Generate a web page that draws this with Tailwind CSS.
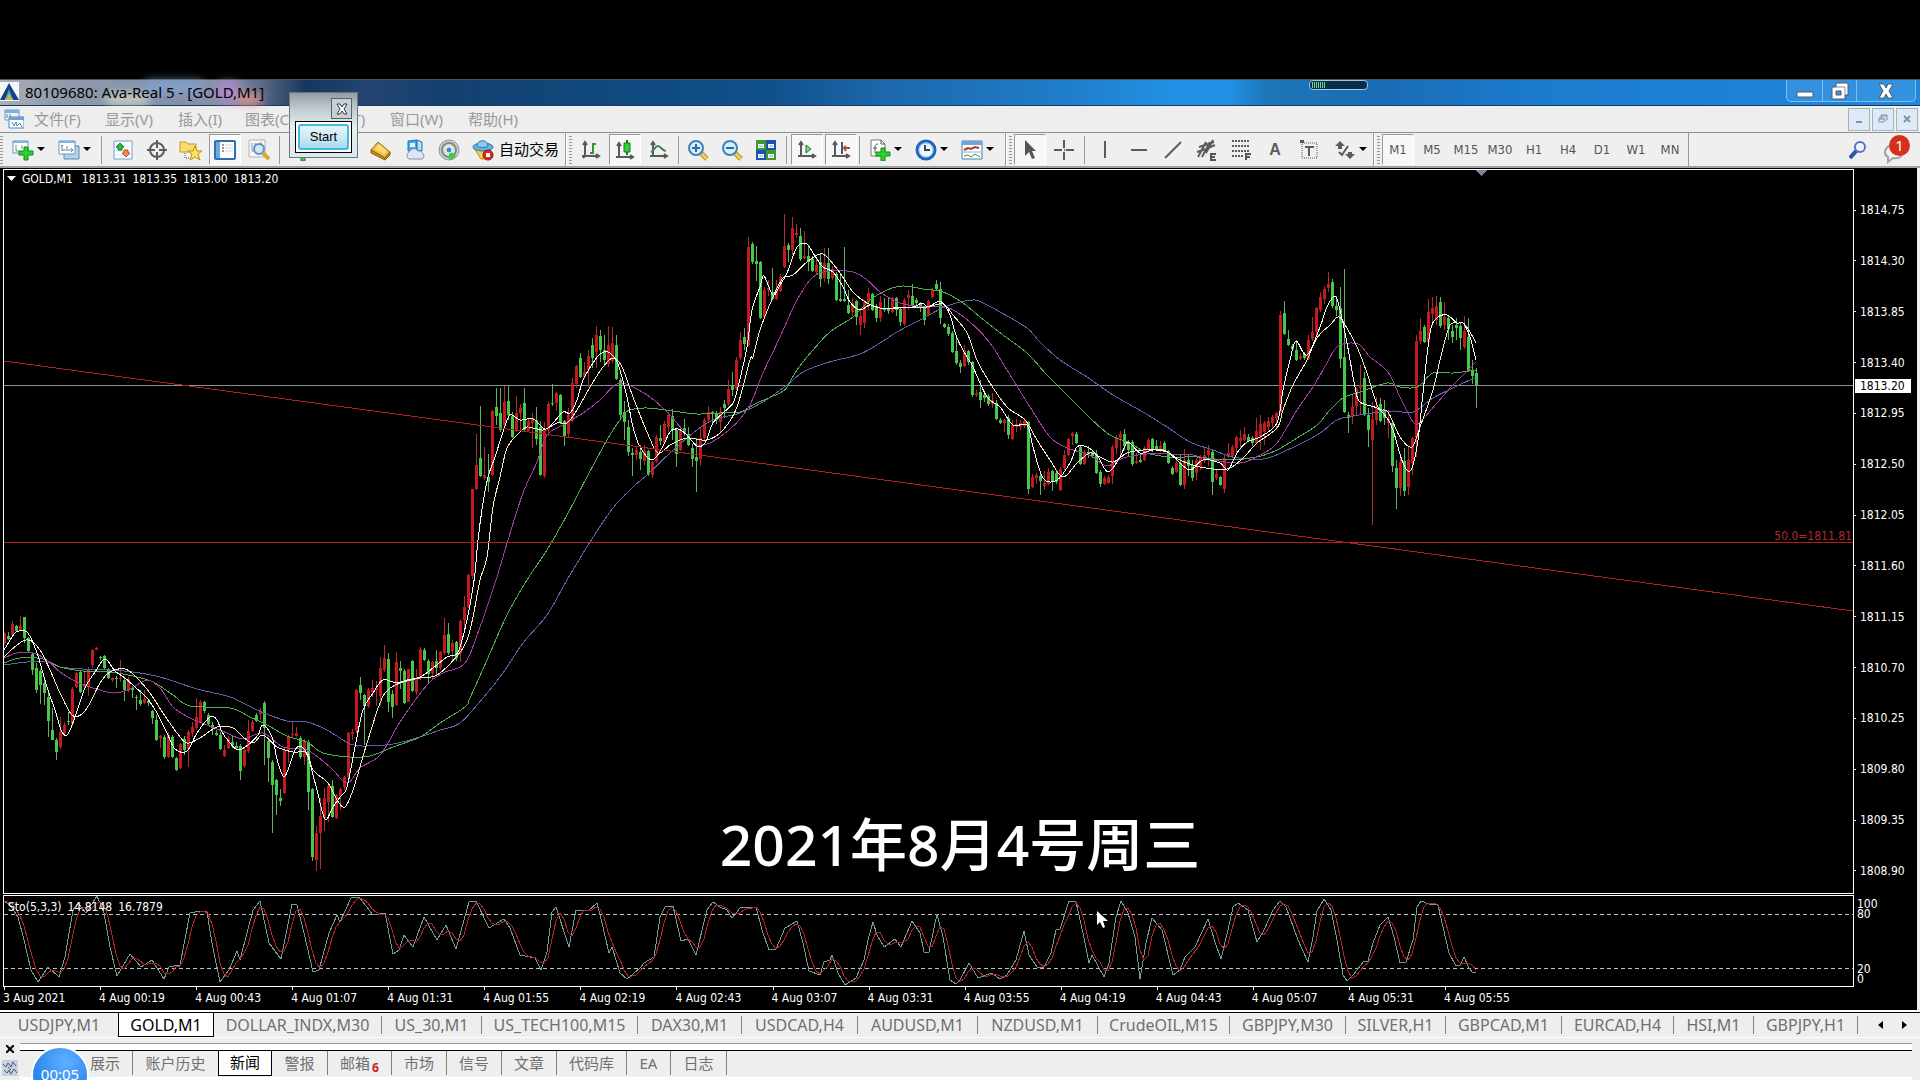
<!DOCTYPE html>
<html lang="zh-CN">
<head>
  <meta charset="UTF-8" />
  <meta name="viewport" content="width=device-width, initial-scale=1" />
  <title>80109680: Ava-Real 5 - [GOLD,M1]</title>
  <script src="https://cdn.jsdelivr.net/npm/@tailwindcss/browser@4"></script>
</head>
<body class="relative h-screen flex flex-col overflow-hidden bg-black font-['Noto_Sans','Noto_Sans_CJK_SC',sans-serif] text-[15px] text-black">
  <div class="h-[79px] shrink-0 bg-black"></div>

  <!-- Title bar -->
  <header class="relative h-[27px] shrink-0 flex items-center justify-between border-t border-b border-t-[#5b5346] border-b-[#163a63] bg-[linear-gradient(90deg,#a9b0bb_0%,#939bab_3%,#8391ab_8%,#8b8fa6_12%,#3f5675_14.5%,#143660_16%,#24446f_19%,#14406f_23%,#0f4a80_33%,#10508b_40%,#1c68ab_46%,#1f7cc8_55%,#2290e4_61%,#2290e4_64%,#1d76b8_66%,#1a6cb4_72%,#1b7bcf_80%,#2187dc_100%)]">
    <!-- Colours of the desktop showing through the glass -->
    <div class="absolute left-[5.500%] bottom-0 w-[44px] h-[12px] rounded-full bg-[#f2f3cf]/60 blur-[5px]"></div>
    <div class="absolute left-[7.500%] top-0 w-[60px] h-[14px] rounded-full bg-[#7ea6d8]/70 blur-[5px]"></div>
    <div class="absolute left-[11.200%] top-[2px] w-[26px] h-[20px] rounded-full bg-[#b48ad8]/80 blur-[5px]"></div>
    <div class="absolute left-[12.300%] bottom-0 w-[26px] h-[12px] rounded-full bg-[#f09a8a]/80 blur-[5px]"></div>
    <div class="relative flex items-center gap-[6px] pb-[2px]">
      <svg class="w-[19px] h-[19px]" viewBox="0 0 19 19"><rect width="19" height="19" fill="#f4f6f8"/><path d="M9 1 0 18h5l4-8 4 8h6z" fill="#173f86"/><path d="M9 7 5 17h8z" fill="#3aa0d0"/><path d="m9 11-3 7h6z" fill="#d9b830"/></svg>
      <h1 class="text-[15px] leading-[20px] whitespace-nowrap">80109680: Ava-Real 5 - [GOLD,M1]</h1>
    </div>
    <div class="absolute left-[68.2%] top-0 w-[59px] h-[10px] rounded-[4px] border border-[#9cc9e8] bg-[#0c2c4c] flex items-center gap-px pl-[2px]">
      <i class="w-px h-[6px] bg-[#6fdc7a]"></i><i class="w-px h-[6px] bg-[#6fdc7a]"></i><i class="w-px h-[6px] bg-[#6fdc7a]"></i><i class="w-px h-[6px] bg-[#6fdc7a]"></i><i class="w-px h-[6px] bg-[#6fdc7a]"></i><i class="w-px h-[6px] bg-[#6fdc7a]"></i><i class="w-px h-[6px] bg-[#6fdc7a]"></i>
    </div>
    <div class="self-start mr-1 flex h-[22px] rounded-b-[5px] border border-t-0 border-[#7fc0f0] bg-[#3f9be4]/60">
      <button class="w-[36px] grid place-items-center border-r border-[#7fc0f0]" aria-label="Minimize"><svg class="w-[18px] h-[18px]" viewBox="0 0 18 18"><rect x="1" y="10" width="16" height="5" rx="1" fill="#fff" stroke="#4c5a6a"/></svg></button>
      <button class="w-[34px] grid place-items-center border-r border-[#7fc0f0]" aria-label="Restore"><svg class="w-[18px] h-[18px]" viewBox="0 0 18 18"><path d="M5 1h12v12h-3v4H1V5h4z" fill="#fff" stroke="#4c5a6a"/><path d="M5 9h5v4H5z" fill="#4d93cc" stroke="#4c5a6a"/><path d="M5 5h9v8" fill="none" stroke="#8291a3"/></svg></button>
      <button class="w-[58px] grid place-items-center" aria-label="Close"><svg class="w-[16px] h-[16px]" viewBox="0 0 16 16"><path d="M1 1h5l2 4 2-4h5l-4 7 4 7h-5l-2-4-2 4H1l4-7z" fill="#fff" stroke="#4c5a6a"/></svg></button>
    </div>
  </header>

  <!-- Menu -->
  <nav class="h-[26px] shrink-0 flex items-center justify-between bg-[#eeeeee] text-[#999]">
    <div class="flex items-center whitespace-nowrap">
      <svg class="w-[20px] h-[20px] ml-1 mr-[10px]" viewBox="0 0 20 20"><path d="M1 1h14v10H1z" fill="#eaf3fb" stroke="#6d9cc8"/><path d="M1 1h14v3H1z" fill="#7fb0dc"/><path d="M5 8h15v11H5z" fill="#fff" stroke="#4f86bb"/><path d="M5 8h15v3H5z" fill="#6aa2d4"/><path d="m8 13 2 4 2-4 1 4 3-3 2 4M3 5v4M6 5v3" fill="none" stroke="#5b7f9f"/></svg>
      <a href="#" class="w-[71px]">文件(F)</a>
      <a href="#" class="w-[73px]">显示(V)</a>
      <a href="#" class="w-[67px]">插入(I)</a>
      <a href="#" class="w-[73px]">图表(C)</a>
      <a href="#" class="w-[72px]">工具(T)</a>
      <a href="#" class="w-[78px]">窗口(W)</a>
      <a href="#">帮助(H)</a>
    </div>
    <div class="flex gap-[2px] pr-[2px]">
      <button class="w-[22px] h-[23px] grid place-items-center border border-[#9db5bd] bg-[#dfe9f7]" aria-label="Minimize chart"><svg class="w-3 h-3" viewBox="0 0 12 12"><path d="M3 9h6" stroke="#7d94a8" stroke-width="2"/></svg></button>
      <button class="w-[22px] h-[23px] grid place-items-center border border-[#9db5bd] bg-[#dfe9f7]" aria-label="Restore chart"><svg class="w-3 h-3" viewBox="0 0 12 12"><path d="M4 2h6v5H8M2 5h5v4H2zM4 2v3M2 6h5M4 3h6" fill="none" stroke="#7d94a8"/></svg></button>
      <button class="w-[22px] h-[23px] grid place-items-center border border-[#9db5bd] bg-[#dfe9f7]" aria-label="Close chart"><svg class="w-3 h-3" viewBox="0 0 12 12"><path d="m3 3 6 6M9 3 3 9" stroke="#7d94a8" stroke-width="2"/></svg></button>
    </div>
  </nav>

  <!-- Toolbars -->
  <div class="h-[36px] shrink-0 flex justify-between border-t border-b-2 border-t-[#8f8f8f] border-b-[#a0a0a0] bg-[#efefef]">
    <div class="flex">
      <!-- Standard -->
      <div class="w-[566px] flex items-center border-r border-[#999]">
        <i class="w-[3px] h-[28px] mr-px bg-[repeating-linear-gradient(180deg,#999_0_1px,#efefef_1px_3px)]"></i>
        <button class="w-[46px] h-[30px] pl-2 flex items-center gap-[3px]" aria-label="New chart">
          <svg class="w-[22px] h-[22px]" viewBox="0 0 22 22"><path d="M1 2h15v12H1z" fill="#fff" stroke="#5c95c8"/><path d="M1 2h15v2H1z" fill="#7fb2df"/><path d="M4 6v6h3M10 6v4" stroke="#7a8a9a" fill="none"/><path d="M12 8h4v4h5v4h-5v5h-4v-5H7v-4h5z" fill="#2ed02e" stroke="#108a18"/></svg>
          <svg class="w-2 h-[5px]" viewBox="0 0 8 5"><path d="M0 0h8L4 4z"/></svg>
        </button>
        <button class="w-[46px] h-[30px] pl-2 flex items-center gap-[3px]" aria-label="Profiles">
          <svg class="w-[22px] h-[22px]" viewBox="0 0 22 22"><path d="M6 7h15v13H6z" fill="#b6d2ec" stroke="#5b86b0"/><path d="M1 2h16v13H1z" fill="#fff" stroke="#5c95c8"/><path d="M1 2h16v2H1z" fill="#7fb2df"/><path d="M4 6v6M3 7l1-1 1 1M4 11h11M13 9l2 2-2 2M9 7v3" fill="none" stroke="#6d7d8d"/></svg>
          <svg class="w-2 h-[5px]" viewBox="0 0 8 5"><path d="M0 0h8L4 4z"/></svg>
        </button>
        <i class="w-px h-[28px] ml-[5px] mr-[4px] bg-[#999]"></i>
        <button class="w-[34px] h-[30px] grid place-items-center" aria-label="Market watch"><svg class="w-[22px] h-[22px]" viewBox="0 0 22 22"><path d="M2 2h18v18H2z" fill="#fbfdff" stroke="#6aa0cf"/><path d="M4 8h14M4 12h14M4 16h14" stroke="#dbe5ee"/><path d="M8 4l4 4h-2v3H6V8H4z" fill="#36b848" stroke="#157a20"/><path d="M14 18l4-4h-2v-3h-4v3h-2z" fill="#f08a50" stroke="#c0521c"/></svg></button>
        <button class="w-[34px] h-[30px] grid place-items-center" aria-label="Data window"><svg class="w-[22px] h-[22px]" viewBox="0 0 22 22"><circle cx="11" cy="11" r="7" fill="none" stroke="#5c5c5c" stroke-width="2"/><path d="M11 1v8M11 13v8M1 11h8M13 11h8" stroke="#5c5c5c" stroke-width="2"/></svg></button>
        <button class="w-[34px] h-[30px] grid place-items-center" aria-label="Navigator folders"><svg class="w-[24px] h-[22px]" viewBox="0 0 24 22"><path d="M1 3h6l2 2h8v8H1z" fill="#f9dd70" stroke="#c39b26"/><path d="M6 14v5h4" fill="none" stroke="#555" stroke-dasharray="1 1"/><path d="m16 7 2 5h5l-4 3 2 6-5-3-5 3 2-6-4-3h5z" fill="#ffe25a" stroke="#b98e1c"/></svg></button>
        <button class="w-[32px] h-[31px] mx-px grid place-items-center border border-[#999] border-b-white border-r-white bg-[#f7f7f7]" aria-label="Navigator"><svg class="w-[22px] h-[20px]" viewBox="0 0 22 20"><rect x="1" y="1" width="20" height="18" rx="1" fill="#fff" stroke="#2e6fb2" stroke-width="2"/><path d="M2 2h4v16H2z" fill="#6ea7dc"/><path d="M8 5h2M8 8h2M8 11h2" stroke="#333" stroke-width="1"/><path d="M11 5h8M11 8h8M11 11h8" stroke="#cfd6dd"/></svg></button>
        <button class="w-[34px] h-[30px] grid place-items-center" aria-label="Strategy tester"><svg class="w-[22px] h-[22px]" viewBox="0 0 22 22"><path d="M1 1h16v17H1z" fill="#f6f6f6" stroke="#a9b4be"/><path d="M4 4v8M7 4v5M13 3v4M4 12h10" stroke="#8899aa" fill="none"/><circle cx="11" cy="10" r="5" fill="#cfe6f7" fill-opacity=".85" stroke="#5b93c2" stroke-width="2"/><path d="m15 14 6 6" stroke="#d7a935" stroke-width="4"/></svg></button>
        <i class="w-px h-[28px] ml-[3px] mr-[2px] bg-[#999]"></i>
        <button class="w-[82px] h-[30px] pl-2 flex items-center" aria-label="New order"><svg class="w-[22px] h-[22px]" viewBox="0 0 22 22"><path d="M2 1h13v16H2z" fill="#fff" stroke="#8aa"/><path d="M11 10h4v4h5v4h-5v4h-4v-4H7v-4h4z" fill="#2ed02e" stroke="#108a18"/></svg></button>
        <button class="w-[34px] h-[30px] grid place-items-center" aria-label="MetaEditor"><svg class="w-[22px] h-[22px]" viewBox="0 0 22 22"><path d="M8 3 20 13l-5 6L1 11z" fill="#f3bf3e" stroke="#9b6a10"/><path d="M1 11v3l14 7 5-5v-3l-5 6z" fill="#d38f1c" stroke="#8c5d0d"/><path d="m9 5 8 7-3 3-9-5z" fill="#fbdc83"/></svg></button>
        <button class="w-[34px] h-[30px] grid place-items-center" aria-label="Market"><svg class="w-[22px] h-[22px]" viewBox="0 0 22 22"><path d="m4 2 9-1v10l-9 1z" fill="#3fa9ea" stroke="#2372b8"/><path d="m13 1 5 2v9l-5-1z" fill="#b8dcf4" stroke="#2372b8"/><path d="M6 4h5v4H6z" fill="#e8f6ff"/><path d="M5 20a4 4 0 0 1 0-7 5 5 0 0 1 9-1 4 4 0 0 1 5 3 3 3 0 0 1-1 5z" fill="#dfe5f2" stroke="#8090b0"/></svg></button>
        <button class="w-[34px] h-[30px] grid place-items-center" aria-label="Signals"><svg class="w-[22px] h-[22px]" viewBox="0 0 22 22"><circle cx="11" cy="11" r="10" fill="#c9cfcb" stroke="#929c96"/><circle cx="11" cy="11" r="7" fill="#dde2df" stroke="#808d86" stroke-width="2"/><path d="M11 11v10a10 10 0 0 0 7-4z" fill="#48c848"/><circle cx="11" cy="11" r="3" fill="#3f89c4" stroke="#dff"/></svg></button>
        <button class="h-[30px] pl-[6px] flex items-center gap-[5px] text-[15px] whitespace-nowrap"><svg class="w-[22px] h-[22px]" viewBox="0 0 22 22"><path d="M2 9h17l-6 11H9z" fill="#f5cf52" stroke="#b88d1d"/><ellipse cx="11" cy="8" rx="10" ry="4" fill="#69b3e0" stroke="#3275a8"/><path d="M5 7c0-7 11-7 11 0-3 2-8 2-11 0z" fill="#8ccbf0" stroke="#3275a8"/><circle cx="16" cy="16" r="5" fill="#d82a20" stroke="#9c130c"/><path d="M14 14h4v4h-4z" fill="#fff"/></svg>自动交易</button>
      </div>

      <!-- Charts -->
      <div class="w-[440px] flex items-center border-r border-[#999] border-l border-l-white">
        <i class="w-[3px] h-[28px] mx-[2px] bg-[repeating-linear-gradient(180deg,#999_0_1px,#efefef_1px_3px)]"></i>
        <button class="w-[34px] h-[30px] grid place-items-center" aria-label="Bar chart"><svg class="w-[20px] h-[20px]" viewBox="0 0 20 20"><path d="M4 3v13M1 16h17M2 5l2-3 2 3M15 14l3 2-3 2M2 18l2-2" fill="none" stroke="#5a5a5a" stroke-width="2"/><path d="M12 3v11M12 4h3M9 13h3" stroke="#2c9a35" stroke-width="2" fill="none"/></svg></button>
        <button class="w-[32px] h-[31px] mx-px grid place-items-center border border-[#999] border-b-white border-r-white bg-[#f7f7f7]" aria-label="Candlesticks"><svg class="w-[20px] h-[22px]" viewBox="0 0 20 22"><path d="M4 5v13M1 18h17M2 7l2-3 2 3M15 16l3 2-3 2" fill="none" stroke="#5a5a5a" stroke-width="2"/><path d="M12 1v15" stroke="#157a20" stroke-width="2"/><path d="M9 4h6v9H9z" fill="#2ed040" stroke="#157a20"/></svg></button>
        <button class="w-[34px] h-[30px] grid place-items-center" aria-label="Line chart"><svg class="w-[20px] h-[20px]" viewBox="0 0 20 20"><path d="M4 3v13M1 16h17M2 5l2-3 2 3M15 14l3 2-3 2" fill="none" stroke="#5a5a5a" stroke-width="2"/><path d="M2 12c3-1 4-6 7-6s4 5 8 5" stroke="#4c8052" fill="none" stroke-width="2"/></svg></button>
        <i class="w-px h-[28px] mx-[2px] bg-[#999]"></i>
        <button class="w-[34px] h-[30px] grid place-items-center" aria-label="Zoom in"><svg class="w-[22px] h-[22px]" viewBox="0 0 22 22"><path d="m14 14 6 6" stroke="#b8902c" stroke-width="5"/><path d="m14 14 6 6" stroke="#f0cf58" stroke-width="3"/><circle cx="9" cy="9" r="7" fill="#d9eefb" stroke="#3c83bd" stroke-width="2"/><path d="M5 9h8M9 5v8" stroke="#2b6ca6" stroke-width="2"/></svg></button>
        <button class="w-[34px] h-[30px] grid place-items-center" aria-label="Zoom out"><svg class="w-[22px] h-[22px]" viewBox="0 0 22 22"><path d="m14 14 6 6" stroke="#b8902c" stroke-width="5"/><path d="m14 14 6 6" stroke="#f0cf58" stroke-width="3"/><circle cx="9" cy="9" r="7" fill="#d9eefb" stroke="#3c83bd" stroke-width="2"/><path d="M5 9h8" stroke="#2b6ca6" stroke-width="2"/></svg></button>
        <button class="w-[34px] h-[30px] grid place-items-center" aria-label="Tile windows"><svg class="w-[22px] h-[22px]" viewBox="0 0 22 22"><path d="M1 1h10v10H1zM11 11h10v10H11z" fill="#3f9a2c"/><path d="M11 1h10v10H11zM1 11h10v10H1z" fill="#1e50b0"/><path d="M3 5h6v4H3zM13 5h6v4h-6zM3 15h6v4H3zM13 15h6v4h-6z" fill="#eef6ff"/><path d="M4 7h4M14 7h4M4 17h4M14 17h4" stroke="#8ab"/></svg></button>
        <i class="w-px h-[28px] mx-[3px] bg-[#999]"></i>
        <button class="w-[32px] h-[31px] mx-px grid place-items-center border border-[#999] border-b-white border-r-white bg-[#f7f7f7]" aria-label="Auto scroll"><svg class="w-[20px] h-[20px]" viewBox="0 0 20 20"><path d="M4 3v13M1 16h17M2 5l2-3 2 3M15 14l3 2-3 2" fill="none" stroke="#5a5a5a" stroke-width="2"/><path d="m9 5 5 4-5 4z" fill="#7fdc86" stroke="#157a20"/></svg></button>
        <button class="w-[32px] h-[31px] mx-px grid place-items-center border border-[#999] border-b-white border-r-white bg-[#f7f7f7]" aria-label="Chart shift"><svg class="w-[20px] h-[20px]" viewBox="0 0 20 20"><path d="M4 3v13M1 16h17M2 5l2-3 2 3M15 14l3 2-3 2" fill="none" stroke="#5a5a5a" stroke-width="2"/><path d="M11 2v12" stroke="#2b5f8c" stroke-width="2"/><path d="M19 8h-6M15 6l-2 2 2 3" stroke="#c04a1c" stroke-width="2" fill="none"/></svg></button>
        <i class="w-px h-[28px] mx-px bg-[#999]"></i>
        <button class="w-[46px] h-[30px] pl-2 flex items-center gap-[3px]" aria-label="Indicators">
          <svg class="w-[22px] h-[22px]" viewBox="0 0 22 22"><path d="M2 1h10l4 4v12H2z" fill="#fff" stroke="#777"/><path d="M12 1v4h4M9 5c-2 0-3 1-3 3v6M4 9h4" fill="none" stroke="#555"/><path d="M12 9h4v4h5v4h-5v5h-4v-5H7v-4h5z" fill="#2ed02e" stroke="#108a18"/></svg>
          <svg class="w-2 h-[5px]" viewBox="0 0 8 5"><path d="M0 0h8L4 4z"/></svg>
        </button>
        <button class="w-[46px] h-[30px] pl-2 flex items-center gap-[3px]" aria-label="Periods">
          <svg class="w-[22px] h-[22px]" viewBox="0 0 22 22"><circle cx="11" cy="11" r="9" fill="#eef6ff" stroke="#1f66b8" stroke-width="3"/><circle cx="11" cy="11" r="7" fill="none" stroke="#8cc0ee"/><path d="M10 6v5h5" fill="none" stroke="#345" stroke-width="2"/></svg>
          <svg class="w-2 h-[5px]" viewBox="0 0 8 5"><path d="M0 0h8L4 4z"/></svg>
        </button>
        <button class="w-[46px] h-[30px] pl-2 flex items-center gap-[3px]" aria-label="Templates">
          <svg class="w-[22px] h-[22px]" viewBox="0 0 22 22"><path d="M1 2h20v18H1z" fill="#fff" stroke="#4a7fae"/><path d="M1 2h20v4H1z" fill="#6ca5d8"/><path d="M1 13h20" stroke="#8fb2d0"/><path d="m3 11 4-2 3 1 4-2 4 1" fill="none" stroke="#b03a2a" stroke-width="2"/><path d="m3 17 4-1 3 2 4-3 5 3" fill="none" stroke="#3f8a45" stroke-width="1"/></svg>
          <svg class="w-2 h-[5px]" viewBox="0 0 8 5"><path d="M0 0h8L4 4z"/></svg>
        </button>
      </div>

      <!-- Line studies -->
      <div class="w-[368px] flex items-center border-r border-[#999] border-l border-l-white">
        <i class="w-[3px] h-[28px] ml-[2px] mr-px bg-[repeating-linear-gradient(180deg,#999_0_1px,#efefef_1px_3px)]"></i>
        <button class="w-[32px] h-[31px] mx-px grid place-items-center border border-[#999] border-b-white border-r-white bg-[#f7f7f7]" aria-label="Cursor"><svg class="w-[12px] h-[20px]" viewBox="0 0 12 20"><path d="M1 0v16l4-4 3 7 3-1-3-7h4z" fill="#555"/></svg></button>
        <button class="w-[34px] h-[30px] grid place-items-center" aria-label="Crosshair"><svg class="w-[20px] h-[20px]" viewBox="0 0 20 20"><path d="M10 0v8M10 12v8M0 10h8M12 10h8M10 10h1" stroke="#5c5c5c" stroke-width="2"/></svg></button>
        <i class="w-px h-[28px] mx-[3px] bg-[#999]"></i>
        <button class="w-[34px] h-[30px] grid place-items-center" aria-label="Vertical line"><svg class="w-[20px] h-[20px]" viewBox="0 0 20 20"><path d="M10 1v17" stroke="#5c5c5c" stroke-width="2"/></svg></button>
        <button class="w-[34px] h-[30px] grid place-items-center" aria-label="Horizontal line"><svg class="w-[20px] h-[20px]" viewBox="0 0 20 20"><path d="M2 10h16" stroke="#5c5c5c" stroke-width="2"/></svg></button>
        <button class="w-[34px] h-[30px] grid place-items-center" aria-label="Trendline"><svg class="w-[20px] h-[20px]" viewBox="0 0 20 20"><path d="M2 18 18 2" stroke="#5c5c5c" stroke-width="2"/></svg></button>
        <button class="w-[34px] h-[30px] grid place-items-center" aria-label="Equidistant channel"><svg class="w-[22px] h-[22px]" viewBox="0 0 22 22"><path d="m2 18 8-15M6 18l8-15M10 14l7-13M1 13l9-3 9-4M3 8l15-5" fill="none" stroke="#5c5c5c" stroke-width="2"/><path d="M20 15h-5v6h5M15 18h4" fill="none" stroke="#555" stroke-width="2"/></svg></button>
        <button class="w-[34px] h-[30px] grid place-items-center" aria-label="Fibonacci retracement"><svg class="w-[20px] h-[22px]" viewBox="0 0 20 22"><path d="M1 2h18M1 7h18M1 12h18M1 17h12" stroke="#5c5c5c" stroke-width="2" stroke-dasharray="2 1"/><path d="M15 21v-6h5M15 18h4" fill="none" stroke="#555" stroke-width="2"/></svg></button>
        <button class="w-[34px] h-[30px] font-['Liberation_Sans',sans-serif] font-bold text-[16px] leading-[20px] text-[#5c5c5c]" aria-label="Text">A</button>
        <button class="w-[34px] h-[30px] grid place-items-center" aria-label="Text label"><svg class="w-[18px] h-[20px]" viewBox="0 0 18 20"><path d="M2 3h15v15H2z" fill="none" stroke="#5c5c5c" stroke-dasharray="1 1"/><path d="M0 0h4v3H0z" fill="#555"/><path d="M5 7h9M9 7v9" fill="none" stroke="#5c5c5c" stroke-width="2"/></svg></button>
        <button class="w-[45px] h-[30px] pl-2 flex items-center gap-[3px]" aria-label="Arrows">
          <svg class="w-[22px] h-[20px]" viewBox="0 0 22 20"><path d="m6 1 5 5H8v3H4V6H1zM16 19l5-5h-3v-2h-4v2h-3z" fill="#5c5c5c"/><path d="m5 12 3 3 6-9" fill="none" stroke="#5c5c5c" stroke-width="2"/></svg>
          <svg class="w-2 h-[5px]" viewBox="0 0 8 5"><path d="M0 0h8L4 4z"/></svg>
        </button>
      </div>

      <!-- Timeframes -->
      <div class="w-[315px] flex items-center border-r border-[#999] border-l border-l-white text-[13px] text-[#555] font-['DejaVu_Sans_Condensed','DejaVu_Sans',sans-serif]">
        <i class="w-[3px] h-[28px] ml-[2px] mr-px bg-[repeating-linear-gradient(180deg,#999_0_1px,#efefef_1px_3px)]"></i>
        <button class="w-[32px] h-[31px] mx-px border border-[#999] border-b-white border-r-white bg-[#f7f7f7]">M1</button>
        <button class="w-[34px] h-[30px]">M5</button>
        <button class="w-[34px] h-[30px]">M15</button>
        <button class="w-[34px] h-[30px]">M30</button>
        <button class="w-[34px] h-[30px]">H1</button>
        <button class="w-[34px] h-[30px]">H4</button>
        <button class="w-[34px] h-[30px]">D1</button>
        <button class="w-[34px] h-[30px]">W1</button>
        <button class="w-[34px] h-[30px]">MN</button>
      </div>
    </div>

    <div class="flex items-center gap-[14px] pr-[10px]">
      <button class="w-[20px] h-[30px] grid place-items-center" aria-label="Search"><svg class="w-[18px] h-[20px]" viewBox="0 0 18 20"><path d="m1 18 7-8" stroke="#2c55a8" stroke-width="4"/><circle cx="11" cy="7" r="5" fill="#eef4ff" stroke="#5577b8" stroke-width="2"/></svg></button>
      <button class="relative w-[28px] h-[30px]" aria-label="Messages">
        <svg class="w-[28px] h-[28px]" viewBox="0 0 28 28"><path d="M12 9c-8 0-12 8-6 12v5l5-4c5 1 9-1 10-5" fill="#f2f2f2" stroke="#a0a0a8" stroke-width="2"/></svg>
        <span class="absolute right-0 top-0 w-[21px] h-[21px] rounded-full bg-[#d5301c] text-white text-[15px] leading-[20px] text-center">1</span>
      </button>
    </div>
  </div>

  <!-- Charts area -->
  <main class="flex-1 min-h-0 flex flex-col pt-px pl-[3px] bg-black border-r-[3px] border-[#f0f0f0] text-white text-[12px] leading-[16px] font-['DejaVu_Sans_Condensed','DejaVu_Sans',sans-serif]">
    <section class="flex-1 min-h-0 flex">
      <div class="relative flex-1 min-w-0 border border-white">
        <svg class="absolute inset-0 w-full h-full" viewBox="4 170 1849 723" preserveAspectRatio="none" shape-rendering="crispEdges" fill="none">
          <path d="M4 385.500H1853" stroke="#8a929a"/>
          <g id="priceSvg"></g>
          <path d="M4 361 1853 611M4 542.500H1853" stroke="#b02020"/>
          <path d="M1475 170h12l-6 6z" fill="#7b8794"/>
        </svg>
        <div class="absolute left-[3px] top-[1px] flex items-center gap-[6px]"><svg class="w-[9px] h-[6px]" viewBox="0 0 9 6"><path d="M0 0h9L4.500 5z" fill="#fff"/></svg><span class="pr-[3px]">GOLD,M1</span><span>1813.31</span><span>1813.35</span><span>1813.00</span><span>1813.20</span></div>
        <div class="absolute right-px top-[49.500%] text-[#b02a2a]">50.0=1811.81</div>
      </div>
      <div id="priceAxis" class="relative w-[63px] shrink-0 flex flex-col justify-between pt-[33px] pb-[15px]">
        <span class="absolute left-px top-[28.900%] w-[56px] h-[14px] bg-white pl-[5px] leading-[14px] text-black">1813.20</span>
      </div>
    </section>

    <section class="flex h-[92px] shrink-0 mt-px">
      <div class="relative flex-1 min-w-0 border border-white">
        <svg id="stoSvg" class="absolute inset-0 w-full h-full" viewBox="4 896 1849 90" preserveAspectRatio="none" shape-rendering="crispEdges" fill="none">
          <path d="M4 914.500H1853M4 968.500H1853" stroke="#c0c0c0" stroke-dasharray="4 3"/>
        </svg>
        <div class="absolute left-[4px] top-[3px] flex gap-[6px]"><span>Sto(5,3,3)</span><span>14.8148</span><span>16.7879</span></div>
        <svg class="absolute left-[59.100%] top-[15px] w-[11px] h-[17px]" viewBox="0 0 11 17"><path d="M0 0v14l3-3 3 6 2-1-2-6h5z" fill="#fff"/></svg>
      </div>
      <div class="w-[63px] shrink-0 flex flex-col justify-between pl-[3px] pt-[4px] pb-[3px] leading-[10px]">
        <div class="flex flex-col"><span>100</span><span>80</span></div>
        <div class="flex flex-col"><span>20</span><span>0</span></div>
      </div>
    </section>

    <div id="timeAxis" class="flex h-[23px] shrink-0 mr-[63px]"></div>
  </main>

  <!-- Chart tabs -->
  <div class="h-[27px] shrink-0 border-t-2 border-white bg-[#eeeeee] text-[16px] text-[#707070]">
    <div class="flex items-start h-[25px] border-t border-black *:mt-[3px] whitespace-nowrap">
      <button class="w-[118px] h-[18px] leading-[18px]">USDJPY,M1</button>
      <button class="w-[96px] h-[24px] !mt-0 leading-[22px] border border-t-0 border-black bg-white text-black">GOLD,M1</button>
      <button class="w-[168px] h-[18px] leading-[18px] border-r border-[#808080]">DOLLAR_INDX,M30</button>
      <button class="w-[100px] h-[18px] leading-[18px] border-r border-[#808080]">US_30,M1</button>
      <button class="w-[156px] h-[18px] leading-[18px] border-r border-[#808080]">US_TECH100,M15</button>
      <button class="w-[104px] h-[18px] leading-[18px] border-r border-[#808080]">DAX30,M1</button>
      <button class="w-[116px] h-[18px] leading-[18px] border-r border-[#808080]">USDCAD,H4</button>
      <button class="w-[120px] h-[18px] leading-[18px] border-r border-[#808080]">AUDUSD,M1</button>
      <button class="w-[120px] h-[18px] leading-[18px] border-r border-[#808080]">NZDUSD,M1</button>
      <button class="w-[132px] h-[18px] leading-[18px] border-r border-[#808080]">CrudeOIL,M15</button>
      <button class="w-[116px] h-[18px] leading-[18px] border-r border-[#808080]">GBPJPY,M30</button>
      <button class="w-[100px] h-[18px] leading-[18px] border-r border-[#808080]">SILVER,H1</button>
      <button class="w-[116px] h-[18px] leading-[18px] border-r border-[#808080]">GBPCAD,M1</button>
      <button class="w-[112px] h-[18px] leading-[18px] border-r border-[#808080]">EURCAD,H4</button>
      <button class="w-[80px] h-[18px] leading-[18px] border-r border-[#808080]">HSI,M1</button>
      <button class="w-[104px] h-[18px] leading-[18px] border-r border-[#808080]">GBPJPY,H1</button>
      <div class="flex ml-auto mr-1">
        <button class="w-[24px] h-[18px] grid place-items-center" aria-label="Scroll left"><svg class="w-[5px] h-[8px]" viewBox="0 0 5 8"><path d="M5 0v8L0 4z"/></svg></button>
        <button class="w-[24px] h-[18px] grid place-items-center" aria-label="Scroll right"><svg class="w-[5px] h-[8px]" viewBox="0 0 5 8"><path d="M0 0v8l5-4z"/></svg></button>
      </div>
    </div>
  </div>

  <!-- Terminal -->
  <footer class="h-[43px] shrink-0 flex border-t border-white bg-[#eeeeee] text-[15px] text-[#707070]">
    <div class="w-[20px] pt-[7px] flex flex-col items-center gap-[7px]">
      <button class="block" aria-label="Close terminal"><svg class="w-[8px] h-[8px]" viewBox="0 0 8 8"><path d="m0 0 8 8M8 0 0 8" stroke="#000" stroke-width="2"/></svg></button>
      <svg class="w-[16px] h-[16px]" viewBox="0 0 16 16"><path d="M0 0h16v16H0z" fill="#c3d3e4"/><path d="m1 4 3 3 2-4 3 4 2-5 3 4M2 10l3 3 2-3 2 4 3-5 3 4M6 7l3 3" fill="none" stroke="#556"/></svg>
    </div>
    <div class="flex-1 mt-[5px] mr-[8px] border-t border-[#999] bg-white pt-[6px]">
      <div class="h-[28px] flex items-start border-t border-black border-b border-b-white bg-[#eeeeee] leading-[20px] whitespace-nowrap">
        <button class="w-[113px] h-[24px] pb-[1px] border-r border-[#808080] pr-[12px] text-right">展示</button>
        <button class="w-[85px] h-[24px] pb-[1px]">账户历史</button>
        <button class="w-[54px] h-[25px] pb-[2px] border border-t-0 border-black bg-white text-black">新闻</button>
        <button class="w-[56px] h-[24px] pb-[1px] border-r border-[#808080]">警报</button>
        <button class="w-[64px] h-[24px] pb-[1px] border-r border-[#808080] text-left pl-3">邮箱<sub class="text-[12px] font-bold text-[#cc2222] pl-[2px]">6</sub></button>
        <button class="w-[55px] h-[24px] pb-[1px] border-r border-[#808080]">市场</button>
        <button class="w-[55px] h-[24px] pb-[1px] border-r border-[#808080]">信号</button>
        <button class="w-[55px] h-[24px] pb-[1px] border-r border-[#808080]">文章</button>
        <button class="w-[70px] h-[24px] pb-[1px] border-r border-[#808080]">代码库</button>
        <button class="w-[44px] h-[24px] pb-[1px] border-r border-[#808080]">EA</button>
        <button class="w-[56px] h-[24px] pb-[1px] border-r border-[#808080]">日志</button>
      </div>
    </div>
  </footer>

  <!-- Caption -->
  <p class="absolute inset-x-0 bottom-[198px] text-center text-white font-medium text-[57px] leading-[76px]">2021年8月4号周三</p>

  <!-- Recorder window -->
  <div class="absolute left-[289px] top-[92px] w-[69px] h-[66px] border border-[#6d7780] bg-[linear-gradient(180deg,#8f9ba3_0%,#c3ccd0_25%,#e9edef_55%,#dfe6ee_100%)] flex flex-col items-center">
    <button class="self-end mt-[5px] mr-[5px] w-[21px] h-[21px] grid place-items-center border border-[#55626c] bg-[#c6d0d6]" aria-label="Close recorder"><svg class="w-[12px] h-[12px]" viewBox="0 0 12 12"><path d="M1 1h3l2 3 2-3h3L8 6l3 5H8L6 8l-2 3H1l3-5z" fill="#fff" stroke="#333"/></svg></button>
    <div class="mt-[2px] border border-black bg-white p-[2px]">
      <button class="block w-[51px] h-[26px] rounded-[3px] border-2 border-[#45b9e0] bg-[linear-gradient(180deg,#e6f4fa_0%,#cfe9f4_50%,#a9daee_100%)] font-['Liberation_Sans',sans-serif] text-[13px] leading-[20px]">Start</button>
    </div>
  </div>
  <div class="absolute left-[31px] top-[1046px] w-[58px] h-[58px] rounded-full border-2 border-white bg-[radial-gradient(circle_at_60%_25%,#5fb0ff,#2f86ee_60%,#3a90f4)] pt-[16px] text-center text-white text-[15px] leading-[20px]">00:05</div>

  <script>
    const svgNs = "http://www.w3.org/2000/svg";

    // high, top, bottom, low for each minute; r = up, g = down
    const candles = `
r632,633,643,645 g632,636,639,640 r621,624,635,637 g625,626,631,632 r616,626,630,631 g617,617,638,643 g637,638,651,652 g653,654,670,675
g663,668,690,693 g669,671,685,704 g680,683,693,705 g690,697,721,737 g708,730,740,740 g738,740,752,760 r717,732,747,749 r722,725,733,734
g712,721,722,725 r687,689,724,726 r672,673,687,688 g671,672,692,693 r671,684,687,690 r667,670,686,696 r649,650,665,668 r647,648,650,650
g656,657,658,660 g655,656,668,670 g668,669,678,679 r677,678,680,682 g676,678,679,688 r660,678,679,682 g678,680,690,701 r677,679,691,692
g686,688,690,698 g695,697,698,710 g690,700,704,706 r690,699,703,704 g700,701,703,706 g710,711,718,724 g715,720,740,741 r735,736,738,748
g735,737,757,759 r732,735,757,758 g735,737,757,758 g757,758,770,771 r743,744,768,769 g736,739,750,755 r730,732,749,767 r722,727,733,737
r698,717,728,730 r700,702,722,723 g701,702,711,713 g713,715,724,725 g722,725,728,735 g730,733,735,736 g732,735,749,750 r745,750,756,757
r736,738,748,749 g735,742,745,748 g742,746,748,750 g744,746,771,780 r747,750,766,768 r720,731,751,753 r720,722,731,732 g713,715,721,722
r708,711,714,720 g701,703,728,765 g738,741,758,782 g760,762,785,833 g779,780,795,815 g789,798,801,806 r747,750,793,794 r735,736,750,763
r721,734,735,737 r727,733,736,737 g736,738,757,759 r739,741,757,765 g740,742,792,810 g788,789,857,861 r826,833,860,871 r798,816,833,869
r788,798,818,831 r784,786,802,822 g780,786,817,818 r794,795,818,819 r788,789,796,810 r776,777,787,790 r732,733,777,781 r729,732,734,740
r689,690,731,733 g677,685,693,700 g694,695,706,745 r688,690,706,708 r680,688,693,697 r681,688,690,706 r657,668,696,706 r645,658,670,672
g653,659,702,712 g690,694,707,718 r652,662,705,706 g661,668,671,689 g669,671,703,704 r669,669,702,702 g660,661,691,692 r669,678,692,695
r647,649,678,680 g648,650,660,661 g659,661,674,684 r661,662,673,680 g650,661,668,675 r651,652,668,670 r618,635,653,655 g623,634,653,655
r640,643,651,660 g641,642,658,661 r620,621,653,662 r596,607,620,630 r574,575,607,608 r489,489,576,579 r434,465,489,490 g406,458,476,477
r447,475,478,480 g454,477,482,492 r410,411,475,476 g388,407,416,425 g388,413,430,432 r386,402,425,428 g385,401,415,420 g412,416,437,438
r396,413,431,432 r404,408,413,430 g388,403,430,431 r418,421,431,432 r413,418,423,448 g407,420,439,445 g421,427,475,476 r422,430,476,478
r402,404,430,436 g384,403,404,406 r392,393,403,411 g394,395,423,424 g420,421,437,446 r408,415,434,438 r378,383,420,422 r365,366,384,388
g353,358,377,378 r362,372,377,378 r350,356,370,387 g338,345,358,368 r326,335,352,368 g330,336,350,362 g335,350,360,365 r326,345,364,367
r327,343,361,363 g335,345,379,380 g378,380,415,419 g401,412,422,440 g420,427,452,456 g448,453,455,476 r447,450,455,460 g445,452,459,470
r445,451,461,465 g450,451,474,476 r461,462,475,478 r435,437,461,463 g425,438,441,445 r421,424,443,444 r412,415,427,432 g409,416,430,440
g429,430,454,467 r428,430,450,451 g419,428,433,436 g427,434,445,446 g444,448,459,467 g438,457,461,492 r427,438,459,466 r418,420,438,442
r406,412,420,422 g411,412,414,424 g411,413,420,424 r407,412,422,432 g400,404,408,418 r380,389,404,406 g372,385,390,396 r357,360,389,390
r332,340,358,360 g328,337,344,350 r237,247,345,346 g242,244,262,264 g246,261,264,281 g261,262,318,319 r287,290,317,318 r280,288,290,296
g268,292,299,300 r280,289,299,300 r274,277,291,292 r214,246,267,268 g243,245,250,262 r217,228,250,255 r224,233,235,238 g228,236,259,261
r231,256,258,259 g246,256,262,271 g256,259,271,272 r257,265,272,275 g254,262,279,287 r248,263,278,282 g248,263,279,284 r266,269,278,280
g272,274,300,301 g275,299,301,302 g247,299,301,302 g290,305,313,314 r298,303,312,316 g300,301,317,325 r308,316,325,335 r300,302,323,328
r288,293,302,310 g293,294,310,311 g304,306,318,322 r296,302,318,322 g298,308,310,312 g298,308,311,314 r297,298,312,313 g297,298,310,316
g308,309,322,326 r298,300,324,326 r290,295,298,310 g284,296,305,308 g298,300,303,308 g302,303,308,312 g307,308,320,325 r300,301,315,316
r288,290,297,298 g280,284,289,291 g282,289,318,324 g323,324,327,328 g324,327,334,336 g331,333,352,353 g337,351,363,365 g360,363,367,373
r345,350,366,367 g350,351,362,365 g361,362,395,397 r390,393,395,397 g380,392,400,408 g393,395,398,402 g394,396,404,406 r393,400,404,408
g400,403,419,420 g418,420,423,424 r419,420,423,432 g415,418,435,439 r420,425,439,440 r419,424,427,432 r420,423,427,430 r418,421,426,428
g421,422,489,494 r474,477,487,488 r473,475,478,484 g474,476,481,495 r471,483,486,490 r468,472,484,485 g470,471,481,491 g470,473,482,484
r467,469,490,491 r450,455,468,470 r438,439,455,456 r432,433,436,445 g432,434,443,444 g446,447,464,465 r450,452,464,465 g446,452,454,458
g450,452,456,458 g450,454,473,474 g470,472,484,487 r476,478,484,485 r475,477,483,484 r445,447,476,484 r435,438,448,454 r431,434,438,455
g429,434,446,450 g440,442,450,456 g440,442,464,466 r453,461,463,464 g453,460,462,463 r446,448,460,461 r438,440,450,451 g438,439,449,452
g440,446,449,450 r441,446,450,452 g441,443,451,452 g450,451,463,464 g466,468,474,475 r460,463,472,473 g455,463,485,486 r449,460,485,489
g455,460,466,476 g460,465,478,481 r458,460,473,480 r455,457,467,470 r448,455,461,463 r445,450,455,466 g450,452,482,495 r470,474,478,480
g476,477,485,486 r455,458,489,493 r443,453,457,458 r445,447,456,458 r436,437,448,455 r430,438,441,450 r427,434,440,441 g434,437,441,442
g436,438,443,446 r418,431,443,444 r415,424,436,450 r421,423,432,445 r417,421,427,430 r415,417,423,427 r412,413,418,430 r311,315,412,413
g301,313,334,335 g330,339,345,346 g344,346,349,350 g340,350,360,361 r353,356,359,360 g352,354,358,360 r335,340,359,360 r317,332,339,341
r307,308,332,335 r292,297,310,312 r286,289,299,304 r272,284,288,292 g279,282,306,308 g296,306,310,316 g287,308,359,368 g269,357,412,413
g412,415,418,433 r395,407,417,424 r388,389,406,415 r365,385,388,415 g372,378,415,416 g408,415,430,447 r402,419,440,525 r397,408,420,425
g398,404,421,422 g400,410,418,425 r410,419,423,438 g421,423,466,472 g460,468,488,509 r455,462,488,496 g448,461,491,496 r447,460,487,495
r437,438,463,475 r335,341,438,457 r318,331,341,344 g325,327,342,343 r299,312,342,343 r297,308,314,326 r296,306,320,325 g297,302,326,328
r302,317,325,330 g315,318,329,340 g325,331,337,343 g318,325,328,340 g323,326,338,350 r316,331,347,349 g318,337,371,372 g360,371,376,384
g368,373,385,408`;

    // Moving averages, slowest first
    const averages = [
      ["#5f62a8", "4,665 27,662 47,662 60,667 83,669 110,670 133,672 160,677 197,689 230,697 257,710 287,721 307,722 327,730 350,744 367,746 393,744 420,737 440,730 460,723 483,698 503,673 523,643 547,615 567,580 590,542 613,508 633,487 647,475 670,453 693,433 713,420 740,413 763,402 787,385 803,372 820,365 833,361 860,354 880,343 897,332 920,320 947,306 973,300 983,303 1000,312 1027,328 1040,342 1060,360 1087,377 1113,395 1143,412 1167,427 1190,442 1213,450 1233,457 1263,459 1283,452 1317,435 1337,420 1353,416 1373,413 1393,411 1413,412 1433,398 1453,388 1476,377"],
      ["#4fae4f", "4,663 20,658 43,659 60,667 83,671 110,672 133,676 153,682 173,695 190,706 230,708 250,717 267,725 287,736 307,742 323,753 350,757 370,756 393,747 420,737 440,723 465,707 470,698 487,660 507,615 527,580 547,550 567,515 587,477 607,440 622,417 630,410 647,408 673,411 697,414 720,413 740,412 757,403 780,393 787,387 797,370 813,350 830,332 853,317 870,300 887,290 903,286 923,289 943,292 963,303 980,317 1003,335 1027,353 1047,375 1070,398 1090,418 1110,435 1130,443 1147,453 1170,457 1197,457 1227,460 1257,457 1277,450 1297,438 1317,425 1330,410 1343,398 1360,392 1387,383 1400,387 1417,387 1433,373 1453,373 1476,370"],
      ["#a63ca6", "4,658 17,653 33,653 47,660 60,672 77,682 90,687 113,693 130,689 147,680 160,688 173,707 190,718 207,725 227,733 243,739 263,733 283,747 307,750 330,767 347,783 360,768 377,758 387,745 400,722 427,685 443,673 465,663 480,627 487,607 497,577 508,540 523,493 537,462 547,435 563,425 583,413 600,400 620,383 647,395 667,412 683,430 698,445 720,437 747,410 763,373 780,337 797,300 813,277 830,271 853,272 867,280 880,292 900,303 927,307 947,307 970,322 990,343 1007,370 1030,407 1050,437 1067,448 1080,452 1093,457 1107,466 1123,458 1147,454 1170,454 1193,455 1207,459 1240,463 1260,455 1277,443 1297,410 1313,387 1327,363 1338,346 1358,344 1370,357 1388,372 1400,397 1413,422 1420,422 1437,403 1453,385 1476,362"],
      ["#f4ecc8", "4,657 17,645 28,640 40,650 50,670 60,693 72,715 82,714 90,703 100,683 110,672 125,669 137,678 150,693 163,713 177,733 187,743 200,738 217,727 233,728 243,737 253,743 263,735 277,747 293,752 307,753 313,770 328,783 337,800 345,807 353,790 367,743 380,703 388,690 400,683 420,678 437,675 458,655 467,640 473,617 480,580 487,557 493,507 500,477 507,448 517,435 527,427 543,430 557,423 567,423 577,410 590,387 603,367 613,358 622,367 633,397 647,432 658,453 670,445 687,438 707,440 723,430 737,407 750,360 753,357 760,330 773,297 783,278 793,275 807,262 820,254 828,258 840,273 853,292 867,303 880,308 900,308 927,307 943,304 953,315 967,333 977,360 990,383 1007,407 1025,420 1037,440 1050,460 1063,477 1077,463 1090,453 1100,457 1113,462 1127,453 1143,450 1163,450 1180,460 1200,467 1227,469 1243,458 1257,443 1277,428 1283,410 1293,385 1307,360 1317,338 1330,325 1339,317 1348,330 1357,347 1367,373 1378,407 1388,412 1400,437 1412,447 1420,427 1433,390 1440,360 1448,330 1453,323 1463,323 1470,332 1476,343"],
      ["#ffffff", "4,650 15,633 22,631 28,633 37,653 47,687 55,710 62,732 68,734 75,717 85,688 95,672 105,659 115,671 125,678 135,687 147,698 157,713 167,733 175,749 187,751 197,733 210,717 217,720 222,732 230,743 238,750 248,745 258,735 263,725 272,737 278,763 285,776 295,750 302,747 308,757 317,790 325,819 333,807 340,797 347,787 355,747 363,710 373,693 383,680 397,683 407,680 420,677 433,668 447,657 458,652 467,620 472,593 475,573 478,540 483,503 488,477 495,457 503,432 510,415 520,420 533,419 545,429 553,423 563,412 570,413 577,400 583,380 593,363 600,354 608,352 616,360 620,370 627,397 633,427 640,447 652,460 662,448 670,432 678,429 687,435 697,446 705,443 713,423 723,413 733,403 738,387 747,347 752,310 760,287 764,276 773,295 780,285 787,273 797,247 807,244 813,253 823,267 833,272 843,287 850,302 860,310 870,305 880,308 893,308 913,307 922,303 928,307 937,302 943,303 950,315 957,338 967,357 973,367 987,397 1000,407 1013,425 1027,425 1033,447 1043,478 1057,480 1070,463 1077,447 1087,447 1097,455 1108,472 1120,457 1128,442 1140,453 1153,450 1167,452 1177,460 1190,470 1203,460 1220,463 1228,470 1237,453 1247,442 1260,437 1277,423 1283,390 1290,360 1296,341 1307,355 1320,327 1327,307 1335,296 1340,310 1347,343 1355,387 1360,402 1377,408 1387,418 1393,430 1403,463 1411,470 1418,440 1423,393 1430,333 1437,318 1447,315 1457,323 1463,323 1470,337 1476,360"],
    ];

    // Stochastic main line
    const stochastic = "4,901 10,905 18,917 24,940 31,970 38,982 48,967 59,977 65,957 73,910 78,903 86,913 97,896 104,913 110,947 117,976 130,954 141,967 152,960 164,979 169,967 180,965 190,913 200,911 207,912 212,943 220,982 229,970 237,951 240,960 253,910 260,901 269,943 281,959 292,904 297,905 304,933 313,972 319,970 329,933 337,915 340,922 351,898 359,897 373,915 385,913 393,954 399,950 404,935 413,947 424,917 437,940 446,925 456,949 469,902 476,901 489,928 504,919 510,928 520,955 535,958 541,970 547,952 552,912 556,907 569,947 576,910 588,911 597,903 602,923 609,953 612,947 620,973 627,979 640,968 644,963 654,957 660,917 665,907 673,906 681,941 688,939 696,955 707,910 713,902 720,907 727,910 732,918 740,908 756,907 762,930 769,950 776,949 785,928 797,921 803,943 809,971 820,975 824,962 830,960 832,955 838,973 845,985 856,978 864,960 868,940 873,922 877,935 884,947 895,939 901,947 912,921 920,933 924,952 929,952 937,914 943,937 950,980 956,984 960,980 969,963 978,978 992,973 1000,979 1007,975 1016,960 1024,931 1029,955 1037,967 1044,967 1051,953 1056,930 1060,929 1069,901 1076,902 1083,933 1089,963 1092,955 1104,977 1109,963 1116,917 1121,901 1128,913 1135,937 1140,979 1146,943 1152,918 1162,930 1173,975 1180,970 1185,957 1195,947 1208,919 1215,942 1221,959 1228,930 1233,907 1238,903 1248,910 1257,942 1264,930 1273,910 1280,901 1286,907 1298,940 1308,962 1313,937 1317,911 1324,899 1331,910 1337,940 1343,975 1347,981 1353,975 1364,961 1368,961 1373,943 1380,925 1388,917 1394,937 1400,963 1406,962 1413,940 1417,907 1421,901 1429,904 1438,905 1443,927 1449,953 1456,966 1460,965 1464,957 1469,968 1473,973 1476,972";

    function addShape(parent, tag, attrs) {
      const el = document.createElementNS(svgNs, tag);
      for (const key in attrs) el.setAttribute(key, attrs[key]);
      parent.appendChild(el);
    }

    function parsePoints(text) {
      return text.split(" ").map(p => p.split(",").map(Number));
    }

    // Smooth curve that passes through every point
    function curve(points) {
      let d = `M${points[0]}`;
      for (let i = 0; i < points.length - 1; i++) {
        const a = points[i - 1] || points[i];
        const b = points[i];
        const c = points[i + 1];
        const e = points[i + 2] || c;
        d += `C${b[0] + (c[0] - a[0]) / 6} ${b[1] + (c[1] - a[1]) / 6} ${c[0] - (e[0] - b[0]) / 6} ${c[1] - (e[1] - b[1]) / 6} ${c[0]} ${c[1]}`;
      }
      return d;
    }

    const priceSvg = document.getElementById("priceSvg");
    const paths = { rWick: "", rBody: "", gWick: "", gBody: "" };
    candles.trim().split(/\s+/).forEach((row, i) => {
      const side = row[0];
      const [high, top, bottom, low] = row.slice(1).split(",").map(Number);
      const x = 4 + i * 4;
      paths[side + "Wick"] += `M${x} ${high}h1V${low}h-1z`;
      paths[side + "Body"] += `M${x - 1} ${top}h3V${Math.max(bottom, top + 1)}h-3z`;
    });
    addShape(priceSvg, "path", { d: paths.rWick, fill: "#a83232" });
    addShape(priceSvg, "path", { d: paths.gWick, fill: "#62b062" });
    addShape(priceSvg, "path", { d: paths.rBody, fill: "#c41a1e" });
    addShape(priceSvg, "path", { d: paths.gBody, fill: "#48c848" });
    averages.forEach(([color, points]) => addShape(priceSvg, "path", { d: curve(parsePoints(points)), stroke: color }));

    // Signal line is the 3-period average of the main line
    const stoPoints = parsePoints(stochastic);
    function stoAt(x) {
      const n = stoPoints.findIndex(p => p[0] >= x);
      if (n <= 0) return stoPoints[0][1];
      const [x0, y0] = stoPoints[n - 1];
      const [x1, y1] = stoPoints[n];
      return y0 + (y1 - y0) * (x - x0) / (x1 - x0);
    }
    let signal = "";
    for (let x = 4; x <= 1476; x += 4) {
      signal += `${x},${Math.round((stoAt(x) + stoAt(x - 4) + stoAt(x - 8)) / 3)} `;
    }
    const stoSvg = document.getElementById("stoSvg");
    addShape(stoSvg, "polyline", { points: stochastic, stroke: "#6f9f96" });
    addShape(stoSvg, "polyline", { points: signal, stroke: "#b82424" });

    const priceAxis = document.getElementById("priceAxis");
    for (let i = 0; i < 14; i++) {
      const row = document.createElement("div");
      row.className = "flex items-center gap-[4px] h-[16px]";
      row.innerHTML = `<i class="w-[2px] h-px bg-white"></i>${(1814.75 - i * 0.45).toFixed(2)}`;
      priceAxis.appendChild(row);
    }

    const timeAxis = document.getElementById("timeAxis");
    for (let i = 0; i < 16; i++) {
      const mins = 19 + (i - 1) * 24;
      const clock = String(Math.floor(mins / 60)).padStart(2, "0") + ":" + String(mins % 60).padStart(2, "0");
      const cell = document.createElement("div");
      cell.className = "w-[5.190%] shrink-0 whitespace-nowrap";
      cell.innerHTML = `<i class="block w-px h-[3px] ml-px bg-white"></i>${i ? "4 Aug " + clock : "3 Aug 2021"}`;
      timeAxis.appendChild(cell);
    }
  </script>
</body>
</html>
